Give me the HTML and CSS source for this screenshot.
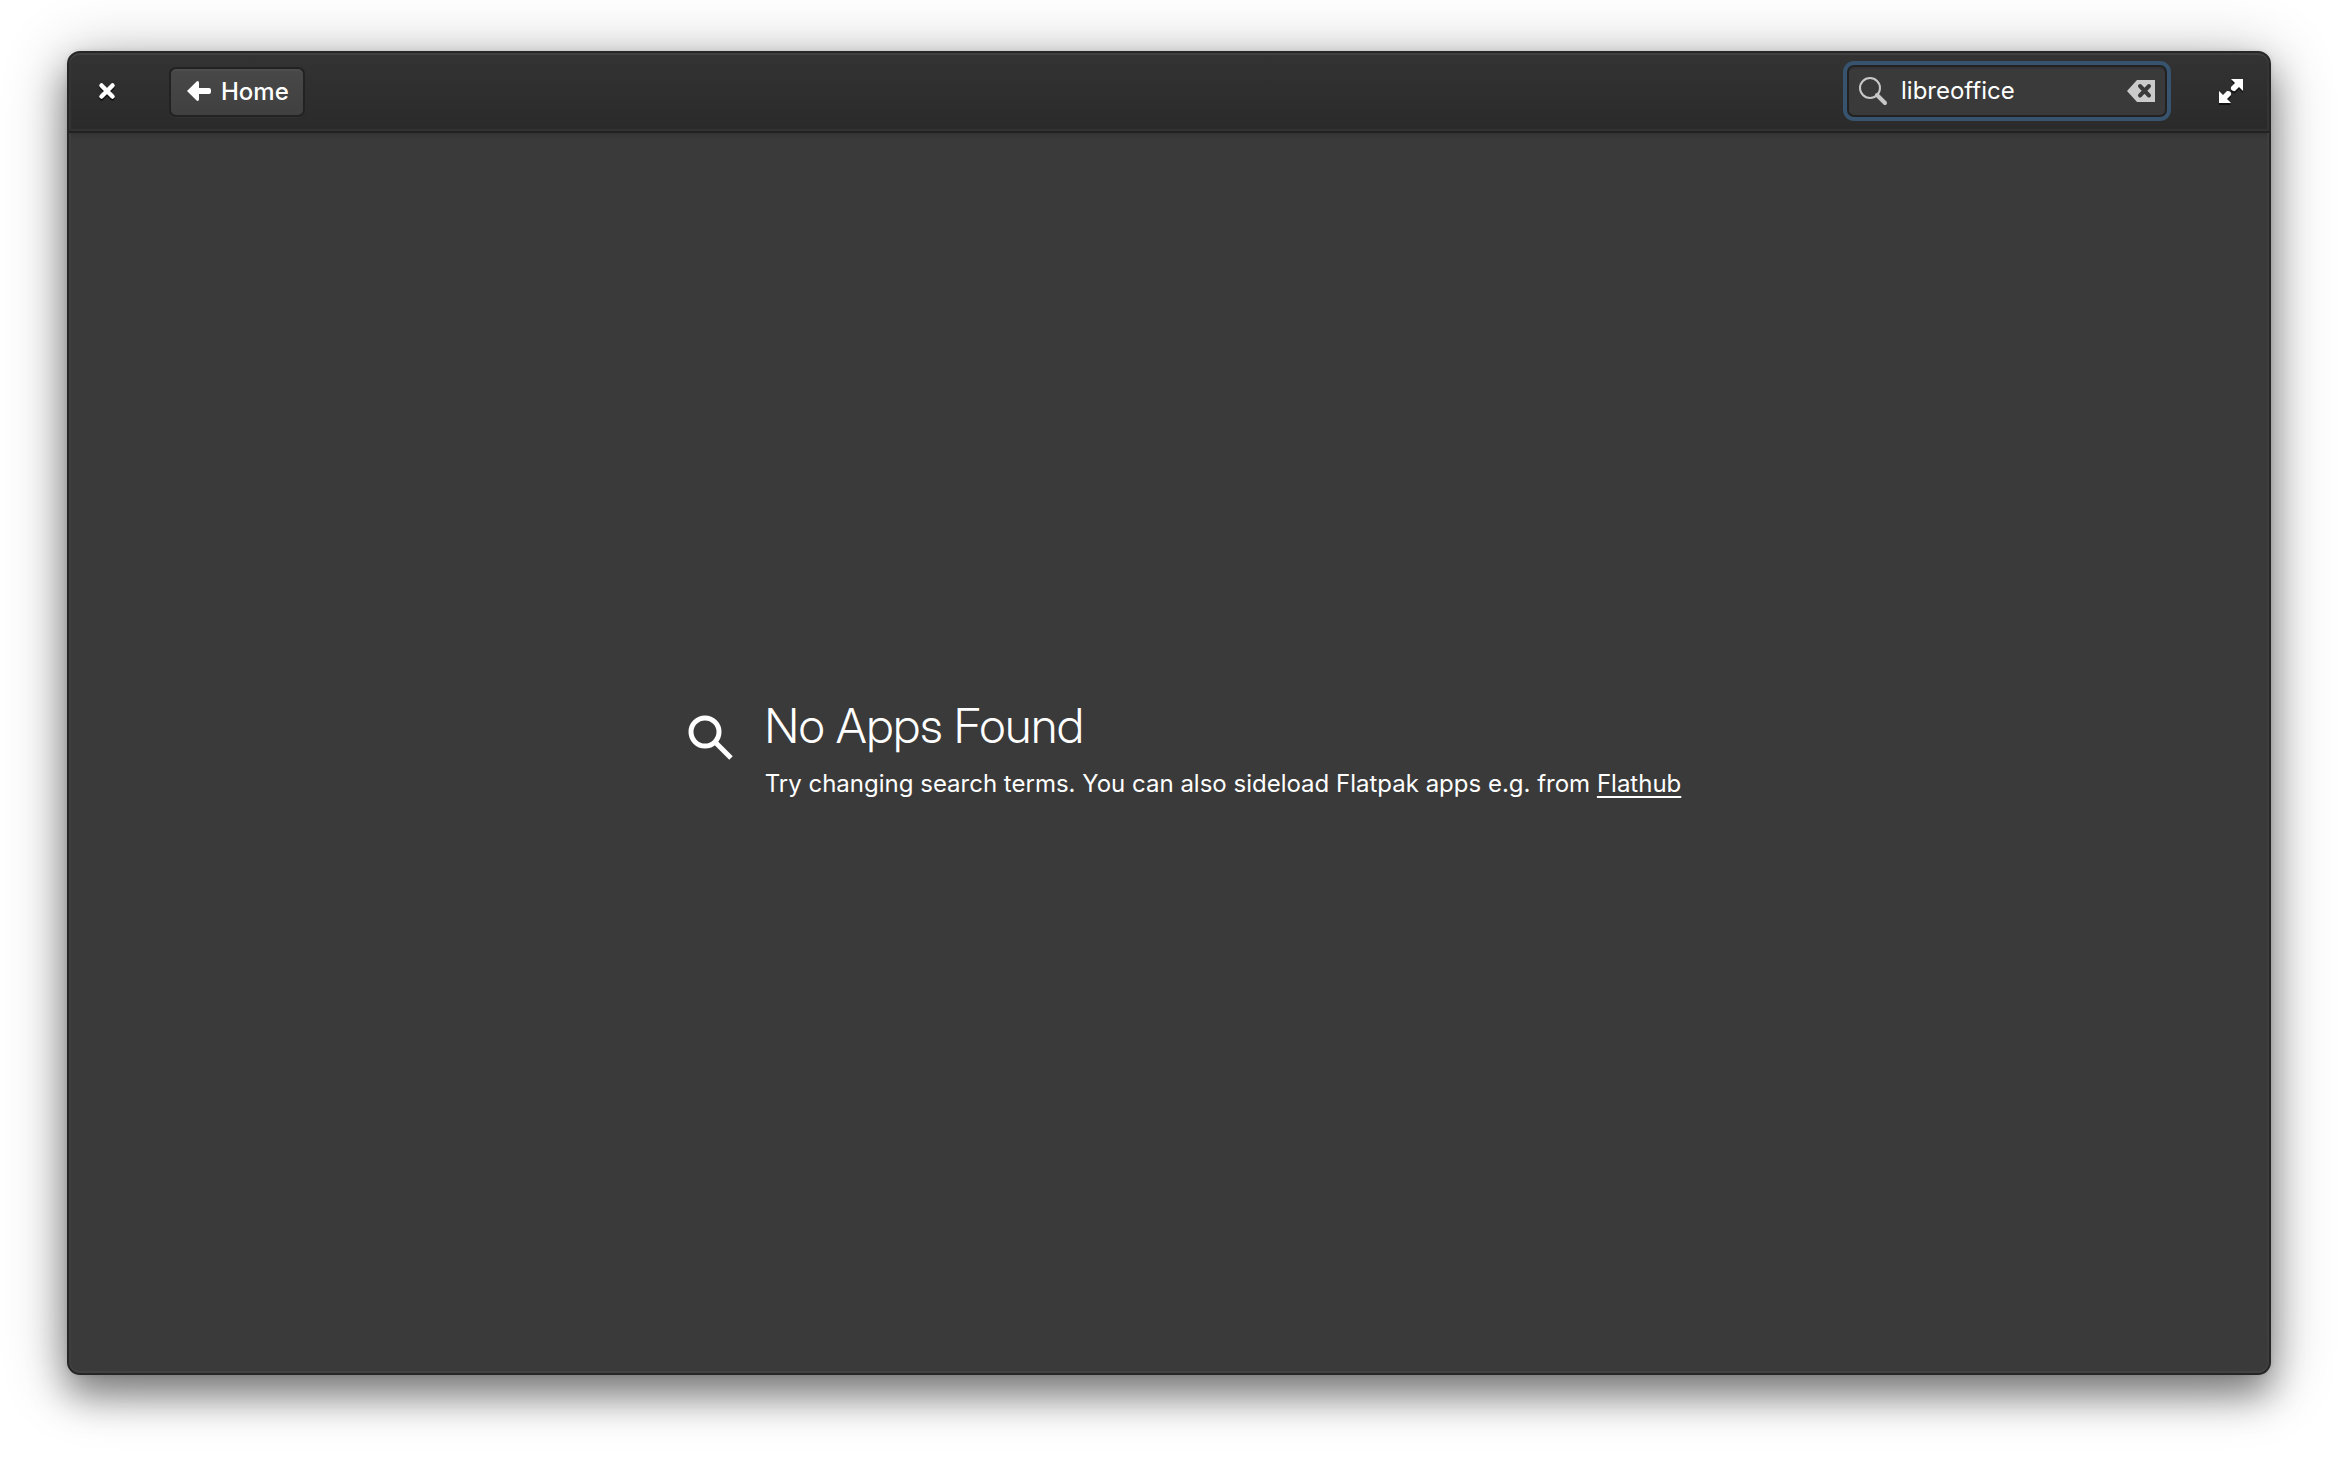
FILE: index.html
```html
<!DOCTYPE html>
<html lang="en">
<head>
<meta charset="utf-8">
<meta name="viewport" content="width=device-width, initial-scale=1">
<title>AppCenter</title>
<link rel="stylesheet" href="styles.css">
</head>
<body>
<div class="window">
  <header class="headerbar">
    <button class="titlebutton" type="button" aria-label="Close">
      <svg class="icon-close" viewBox="0 0 16 16"><path d="M2.500 2.500 13.500 13.500M13.500 2.500 2.500 13.500"/></svg>
    </button>
    <button class="back-button" type="button">
      <svg class="icon-back" viewBox="0 0 24 20"><path d="M0 10 9.600.4Q12 -.6 12 2V7H22Q24 7 24 9V11Q24 13 22 13H12V18Q12 20.600 9.600 19.600Z"/></svg>
      <span>Home</span>
    </button>
    <label class="search">
      <svg class="icon-find" viewBox="0 0 28 28"><circle cx="11" cy="11" r="10"/><path d="M18 18 26 26"/></svg>
      <input class="search-input" type="text" value="libreoffice" aria-label="Search apps">
      <button class="clear-button" type="button" aria-label="Clear">
        <svg class="icon-clear" viewBox="0 0 28 22"><path class="tag" d="M10 0H28V22H10L0 11Z"/><path class="cross" d="M13 6 22 15.500M22 6 13 15.500"/></svg>
      </button>
    </label>
    <button class="titlebutton" type="button" aria-label="Maximize">
      <svg class="icon-maximize" viewBox="0 0 24 24"><path d="M12 0H24V12L20 8 16 12Q14 12.500 12.500 11 11.500 10 12 8L16 4ZM12 24H0V12L4 16 8 12Q10 11.500 11.500 13 12.500 14 12 16L8 20Z"/></svg>
    </button>
  </header>
  <main class="content">
    <section class="alert">
      <svg class="icon-search" viewBox="0 0 48 48"><circle cx="20" cy="18" r="14"/><path d="M30 28 46 44"/></svg>
      <div class="alert-text">
        <h1 class="title">No Apps Found</h1>
        <p class="description">Try changing search terms. You can also sideload Flatpak apps e.g. from <a class="link" href="#">Flathub</a></p>
      </div>
    </section>
  </main>
</div>
</body>
</html>
```
FILE: styles.css
```css
* { box-sizing: border-box; }

body {
  display: flex;
  min-height: 100vh;
  margin: 0;
  padding: 51px 67px 83px;
  background: #fff;
  color: #fff;
  font: 24px/32px Inter, sans-serif;
}

button {
  margin: 0;
  padding: 0;
  border: 0;
  background: none;
  color: inherit;
  font: inherit;
}

svg { display: block; flex: none; overflow: visible; }

.window {
  display: flex;
  flex: 1;
  flex-direction: column;
  overflow: hidden;
  border: 2px solid #262626;
  border-radius: 13px;
  background: #3a3a3a;
  box-shadow: 0 0 4px rgba(0, 0, 0, .1), 0 20px 36px rgba(0, 0, 0, .4), 0 8px 64px rgba(0, 0, 0, .3);
}

.headerbar {
  display: flex;
  align-items: center;
  height: 80px;
  padding: 0 18px 2px;
  border-bottom: 2px solid #222;
  border-radius: 11px 11px 0 0;
  background: linear-gradient(#333, #2a2a2a);
  box-shadow: inset 0 2px #404040, inset 0 -2px #323232, inset 2px 0 #343434, inset -2px 0 #343434, 0 2px 4px rgba(0, 0, 0, .15);
}

.titlebutton {
  display: grid;
  place-items: center;
  width: 40px;
  height: 40px;
}

.titlebutton svg { filter: drop-shadow(0 2px 0 rgba(0, 0, 0, .6)); }

.icon-close {
  width: 16px;
  height: 16px;
  fill: none;
  stroke: #fff;
  stroke-width: 4.500;
  stroke-linecap: round;
}

.back-button {
  display: flex;
  align-items: center;
  gap: 10px;
  height: 50px;
  margin: 2px 0 0 42px;
  padding: 0 14px 0 16px;
  border: 2px solid #222;
  border-radius: 7px;
  background: linear-gradient(#484848, #404040);
  box-shadow: inset 0 2px #4d4d4d, 0 1px 1px #333;
  font-weight: 500;
}

.icon-back { width: 24px; height: 20px; margin-bottom: 2px; fill: #fff; }

.search {
  display: flex;
  align-items: center;
  width: 320px;
  height: 52px;
  margin: 0 44px 0 auto;
  padding: 0 10px;
  border: 2px solid #222;
  border-radius: 7px;
  background: #3a3a3a;
  box-shadow: 0 0 0 4px #38536e, inset 0 2px #343434;
}

.icon-find {
  width: 28px;
  height: 28px;
  fill: none;
  stroke: #c8c8c8;
  stroke-width: 2;
  stroke-linecap: round;
}

.icon-find path { stroke-width: 4; }

.search-input {
  flex: 1;
  min-width: 0;
  margin: 0 14px;
  padding: 0;
  border: 0;
  outline: 0;
  background: none;
  color: #fff;
  font: inherit;
}

.icon-clear { width: 28px; height: 22px; }
.icon-clear .tag { fill: #cbcbcb; }
.icon-clear .cross { fill: none; stroke: #3a3a3a; stroke-width: 4; stroke-linecap: round; }

.icon-maximize { width: 24px; height: 24px; fill: #fff; }

.content {
  display: grid;
  flex: 1;
  place-items: center;
  padding: 0 0 8px 28px;
  border-radius: 0 0 11px 11px;
  box-shadow: inset 0 -2px #424242, inset 2px 0 #3e3e3e, inset -2px 0 #3e3e3e;
}

.alert { display: flex; gap: 32px; }

.icon-search {
  width: 48px;
  height: 48px;
  margin-top: 15px;
  fill: none;
  stroke: #fff;
  stroke-width: 5;
}

.title {
  margin: 0 0 15px;
  font-family: "Inter Display", Inter, sans-serif;
  font-size: 48px;
  font-weight: 300;
  line-height: 54px;
}

.description { margin: 0; }

.link {
  color: inherit;
  text-decoration: underline;
  text-decoration-thickness: 2px;
  text-underline-offset: 4px;
}
```
